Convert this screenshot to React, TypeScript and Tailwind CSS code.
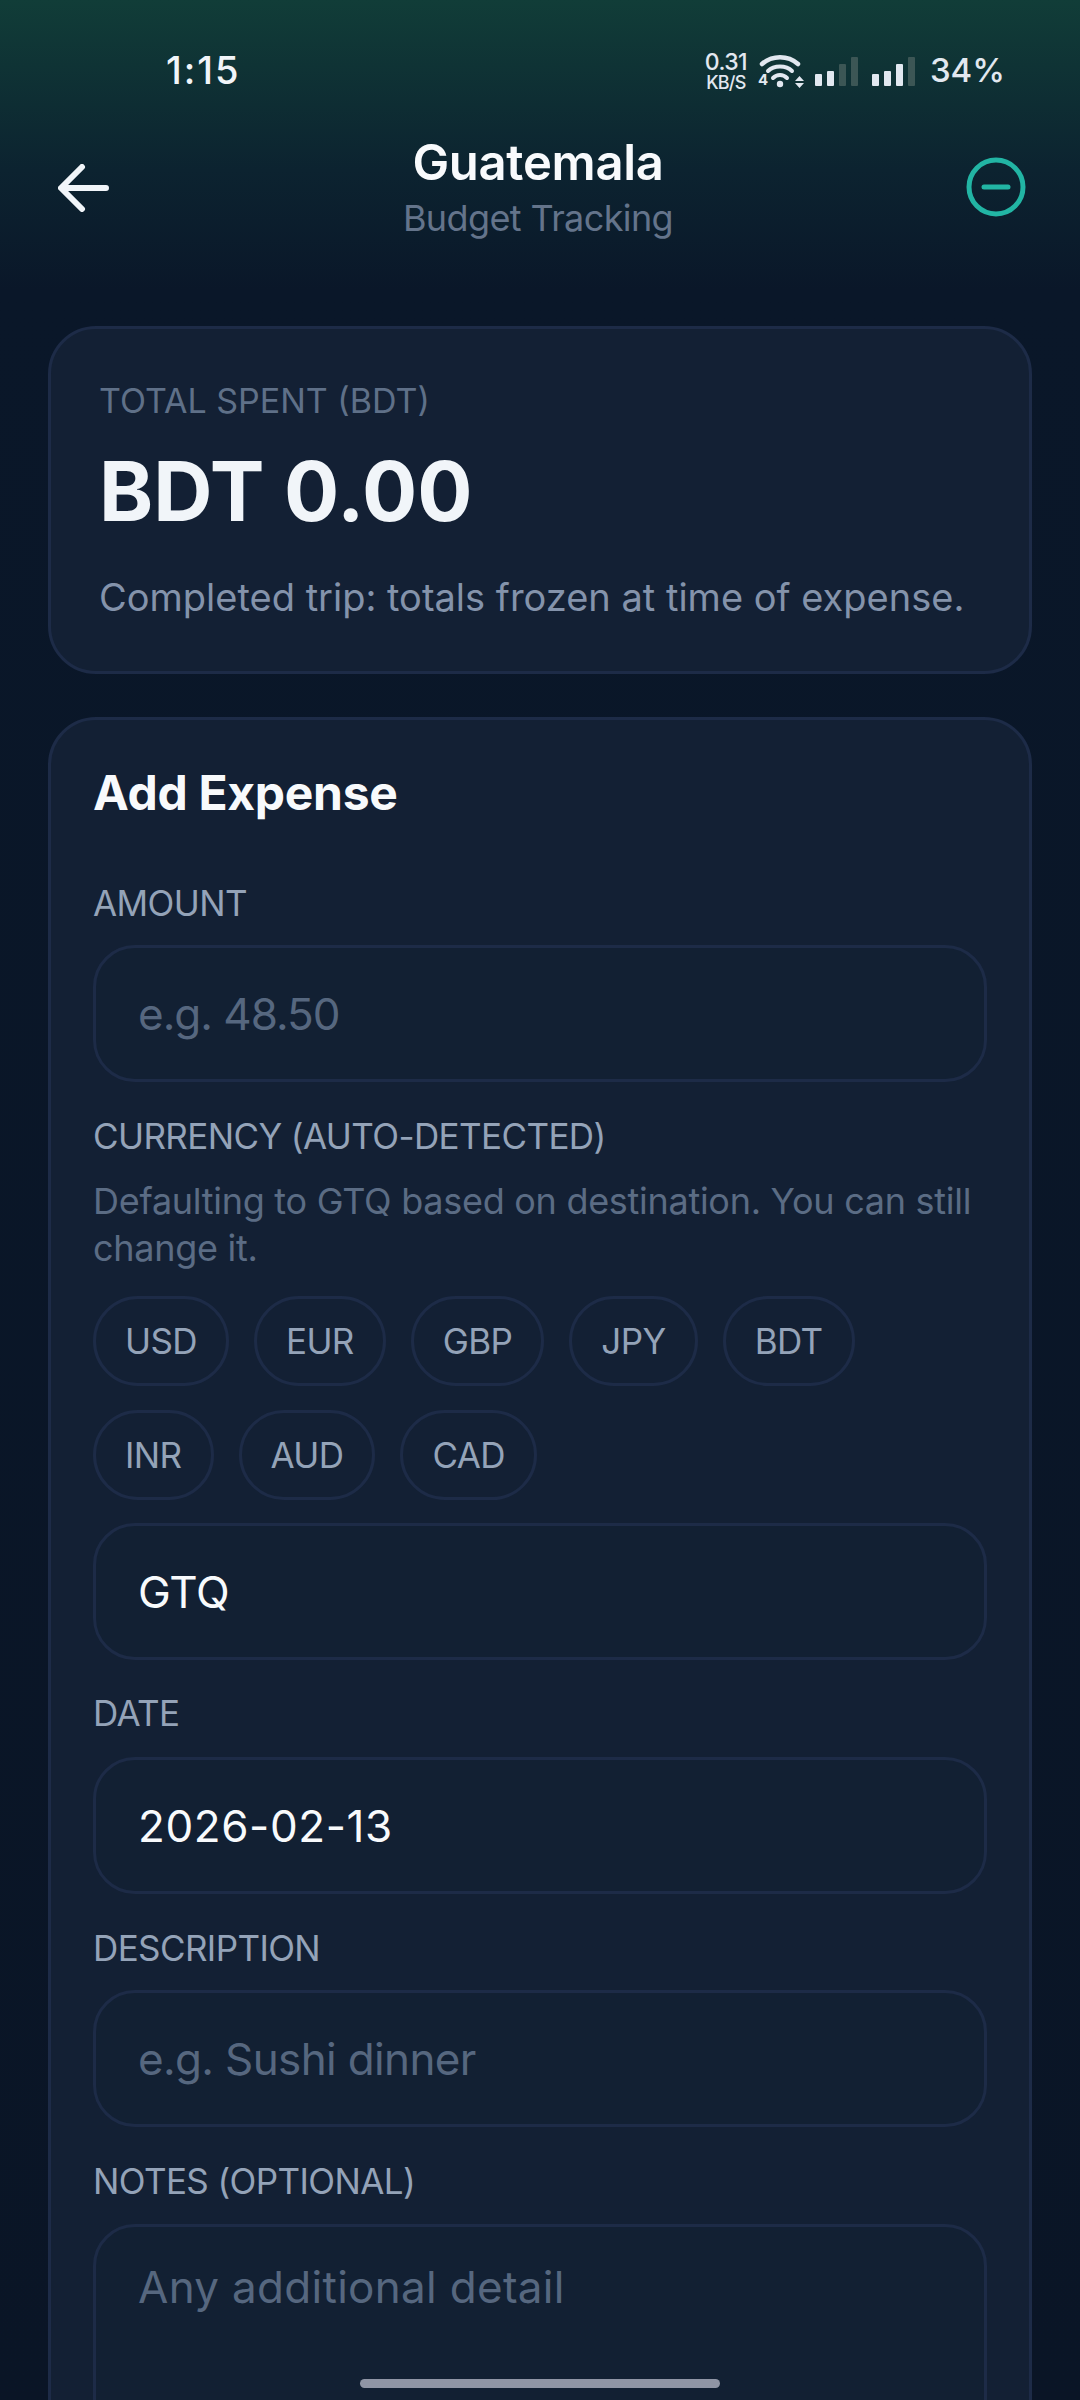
const chipRows = [
  ["USD", "EUR", "GBP", "JPY", "BDT"],
  ["INR", "AUD", "CAD"],
];

function Label({ children, className = "" }: { children: string; className?: string }) {
  return <p className={`text-[35px] leading-[44px] tracking-[-0.6px] text-[#94a3b8] ${className}`}>{children}</p>;
}

function Field({ value, placeholder, spacing = "tracking-[-0.3px]" }: { value?: string; placeholder?: string; spacing?: string }) {
  return (
    <div className="flex h-[137px] items-center rounded-[42px] border-[3px] border-[#1d2b47] bg-[#122033] px-[42px]">
      <span className={`text-[44px] ${spacing} ${value ? "text-[#f8fafc]" : "text-[#56677f]"}`}>
        {value ?? placeholder}
      </span>
    </div>
  );
}

function StatusIcons() {
  return (
    <div className="flex items-center">
      <div className="flex w-[46px] flex-col items-center text-[#e2e8f0]">
        <span className="text-[23px] font-medium leading-[24px] tracking-[-0.6px]">0.31</span>
        <span className="text-[18px] font-medium leading-[18px] tracking-[-0.8px]">KB/S</span>
      </div>
      <div className="relative ml-[9px] h-[34px] w-[46px]">
        <svg width="46" height="34" viewBox="0 0 46 34" fill="none" stroke="#e2e8f0" strokeLinecap="round">
          <path d="M4 10C14 1 30 1 40 10" strokeWidth="4.5" />
          <path d="M10 17C16 11 28 11 34 17" strokeWidth="4" />
          <path d="M15 24C19 20 25 20 29 24" strokeWidth="4" />
          <circle cx="22" cy="30" r="3.2" fill="#e2e8f0" stroke="none" />
          <path d="M37 27L41.5 22L46 27ZM37 29H46L41.5 34Z" fill="#e2e8f0" stroke="none" />
        </svg>
        <span className="absolute bottom-0 left-0 text-[15px] font-bold leading-[16px] text-[#e2e8f0]">4</span>
      </div>
      <svg width="44" height="30" viewBox="0 0 44 30" className="ml-[11px]">
        <rect x="0" y="18" width="7" height="12" rx="1" fill="#e2e8f0" />
        <rect x="12" y="15" width="7" height="15" rx="1" fill="#e2e8f0" />
        <rect x="24" y="8" width="7" height="22" rx="1" fill="#3c5655" />
        <rect x="36" y="1" width="7" height="29" rx="1" fill="#3c5655" />
      </svg>
      <svg width="44" height="30" viewBox="0 0 44 30" className="ml-[13px]">
        <rect x="0" y="18" width="7" height="12" rx="1" fill="#e2e8f0" />
        <rect x="12" y="15" width="7" height="15" rx="1" fill="#e2e8f0" />
        <rect x="24" y="8" width="7" height="22" rx="1" fill="#e2e8f0" />
        <rect x="36" y="1" width="7" height="29" rx="1" fill="#3c5655" />
      </svg>
      <span className="ml-[14px] text-[33px] font-medium text-[#e2e8f0]">34%</span>
    </div>
  );
}

export default function App() {
  return (
    <div
      className="relative h-[2400px] w-[1080px] overflow-hidden bg-[linear-gradient(180deg,#113d38_0px,#0c2330_170px,#0a1729_290px,#0a1526_100%)]"
      style={{ fontFamily: "Inter, 'Noto Sans', sans-serif" }}
    >
      {/* status bar */}
      <div className="flex h-[136px] items-center justify-between pl-[166px] pr-[75px] pt-[5px]">
        <span className="text-[38px] font-medium tracking-[2px] text-[#f1f5f9]">1:15</span>
        <StatusIcons />
      </div>

      {/* header */}
      <div className="flex h-[104px] items-center justify-between pl-[58px] pr-[54px]">
        <svg width="52" height="48" viewBox="0 0 52 48" fill="none" stroke="#f1f5f9" strokeWidth="6" strokeLinecap="round" strokeLinejoin="round">
          <path d="M48 24H4M24 3L3 24L24 45" />
        </svg>
        <div className="flex flex-col items-center">
          <span className="pb-[3px] text-[49px] font-semibold leading-[58px] tracking-[-0.3px] text-[#f8fafc]">Guatemala</span>
          <span className="text-[36px] leading-[47px] tracking-[-0.6px] text-[#64748b]">Budget Tracking</span>
        </div>
        <svg width="60" height="60" viewBox="0 0 60 60" className="-translate-y-px" fill="none" stroke="#22b5a4" strokeWidth="5" strokeLinecap="round">
          <circle cx="30" cy="30" r="27" />
          <path d="M18 30H42" />
        </svg>
      </div>

      <div className="flex flex-col gap-[43px] px-[48px] pt-[86px]">
        {/* total */}
        <section className="h-[348px] rounded-[48px] border-[3px] border-[#1d2b47] bg-[#132034] px-[48px] pt-[50px]">
          <p className="text-[34px] leading-[44px] text-[#5f7088]">TOTAL SPENT (BDT)</p>
          <p className="mt-[21px] text-[82px] font-bold leading-[96px] text-[#f1f5f9]">BDT 0.00</p>
          <p className="mt-[32px] text-[38px] leading-[50px] text-[#8493ab]">Completed trip: totals frozen at time of expense.</p>
        </section>

        {/* add expense */}
        <section className="rounded-[48px] border-[3px] border-[#1d2b47] bg-[#132034] px-[42px] pt-[43px]">
          <h2 className="text-[48px] font-bold leading-[60px] tracking-[-0.3px] text-[#f8fafc]">Add Expense</h2>
          <Label className="mb-[20px] mt-[58px]">AMOUNT</Label>
          <Field placeholder="e.g. 48.50" spacing="tracking-[-1px]" />
          <Label className="mt-[32px]">CURRENCY (AUTO-DETECTED)</Label>
          <p className="mt-[20px] text-[36px] leading-[47px] tracking-[-0.28px] text-[#5b6c84]">
            Defaulting to GTQ based on destination. You can still change it.
          </p>
          <div className="mt-[24px] flex flex-col gap-[24px]">
            {chipRows.map((row) => (
              <div key={row[0]} className="flex gap-[25px]">
                {row.map((c) => (
                  <span key={c} className="flex h-[90px] items-center rounded-full border-[3px] border-[#1d2b47] px-[29px] text-[35px] tracking-[-0.6px] text-[#94a3b8]">
                    {c}
                  </span>
                ))}
              </div>
            ))}
          </div>
          <div className="mt-[23px]">
            <Field value="GTQ" />
          </div>
          <Label className="mb-[22px] mt-[31px]">DATE</Label>
          <Field value="2026-02-13" spacing="tracking-[0.6px]" />
          <Label className="mb-[20px] mt-[32px]">DESCRIPTION</Label>
          <Field placeholder="e.g. Sushi dinner" spacing="tracking-[-0.65px]" />
          <Label className="mb-[21px] mt-[32px]">NOTES (OPTIONAL)</Label>
          <div className="h-[300px] rounded-[42px] border-[3px] border-[#1d2b47] bg-[#122033] px-[42px] pt-[27px]">
            <span className="text-[44px] tracking-[0.3px] text-[#56677f]">Any additional detail</span>
          </div>
        </section>
      </div>

      {/* home indicator */}
      <div className="absolute bottom-[12px] left-[360px] h-[9px] w-[360px] rounded-full bg-[#8f95a5]" />
    </div>
  );
}
